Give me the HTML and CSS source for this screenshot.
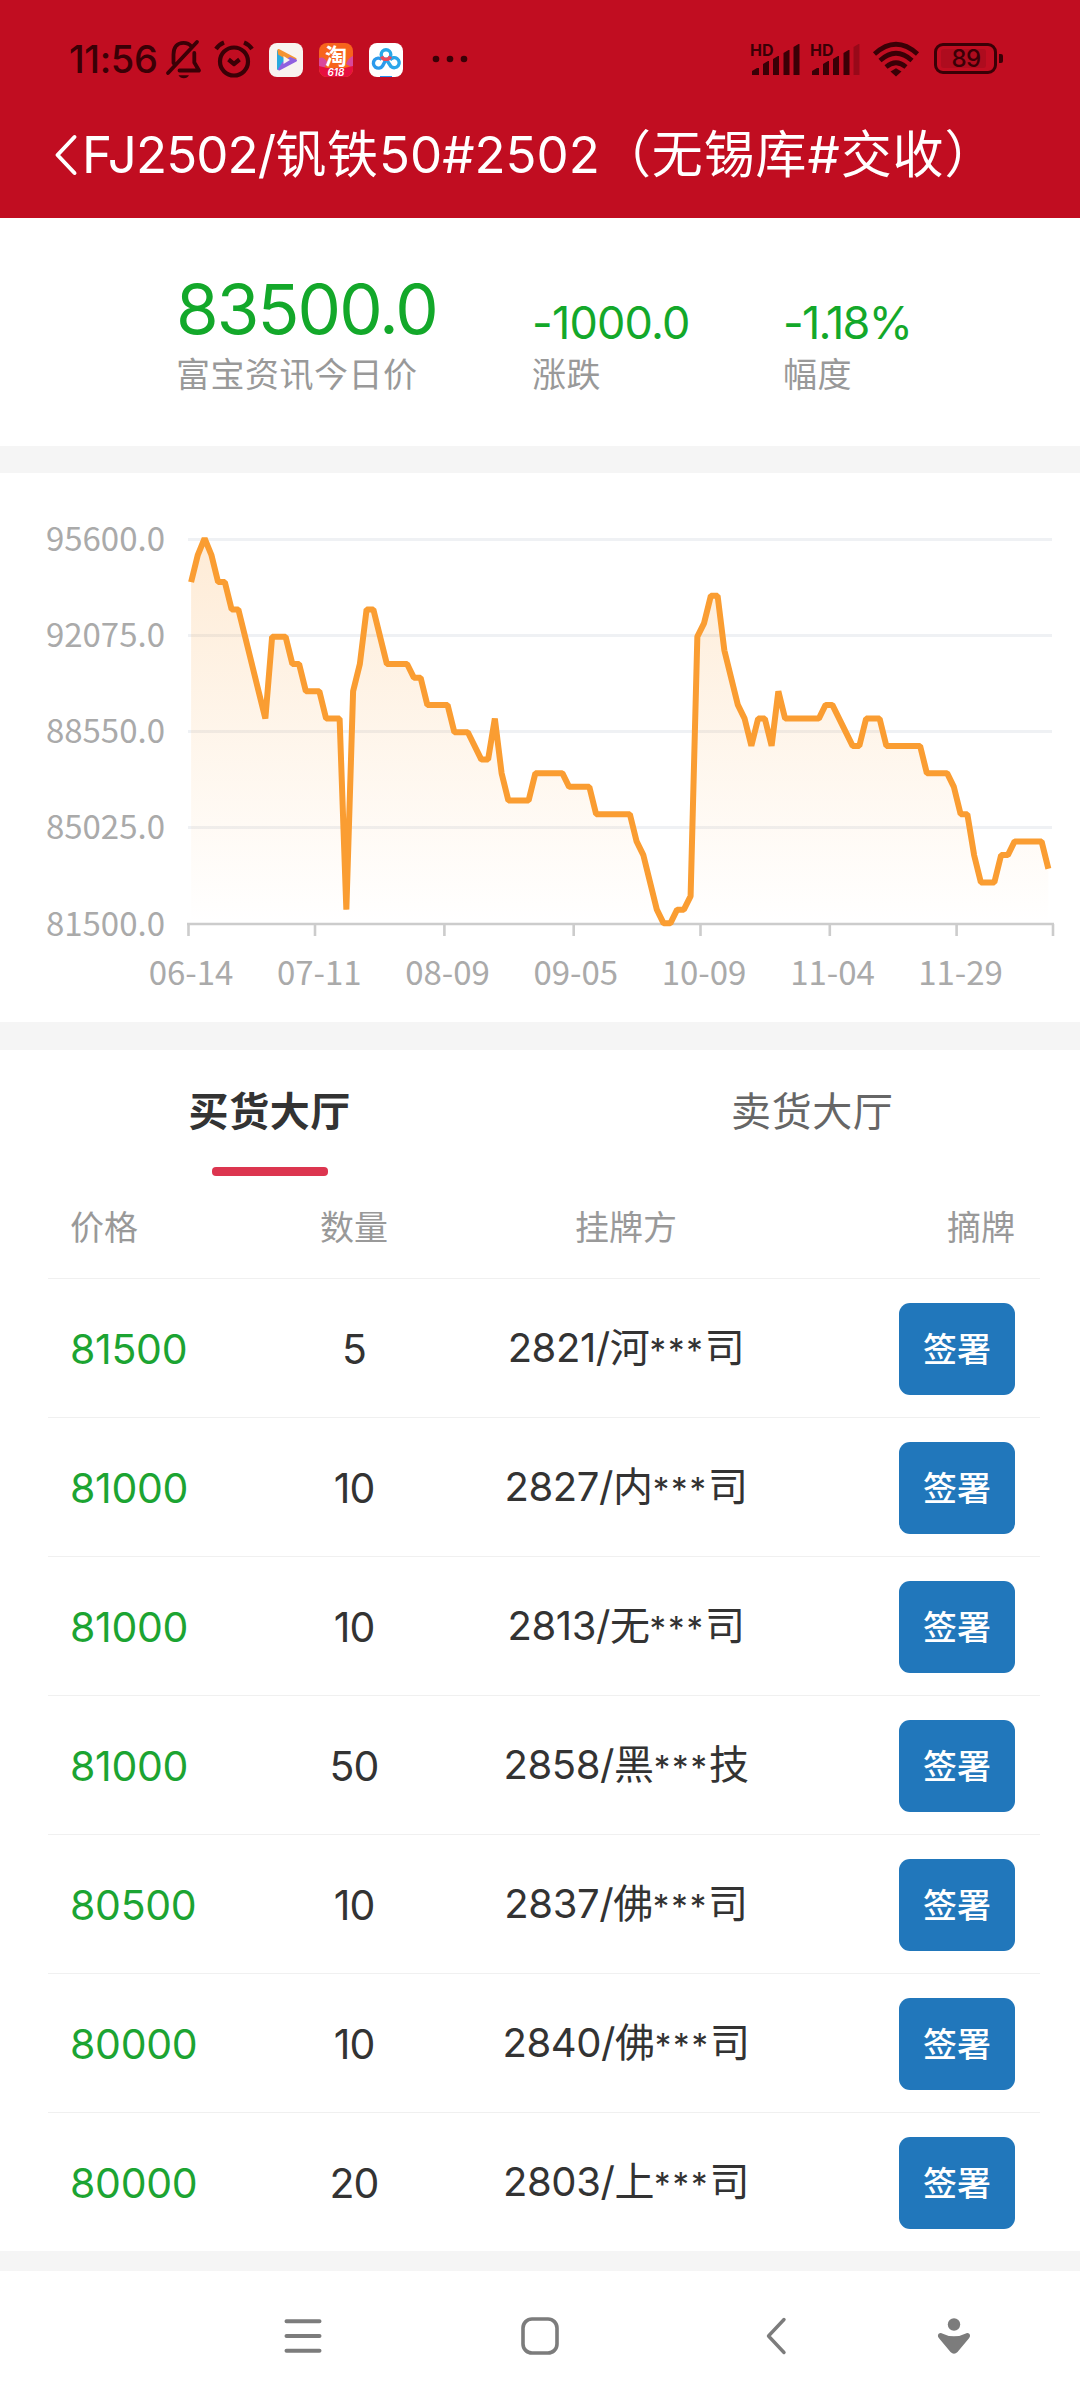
FILE: index.html
```html
<!DOCTYPE html>
<html lang="zh-CN">
<head>
<meta charset="utf-8">
<title>FJ2502</title>
<link rel="stylesheet" href="styles.css">
</head>
<body>
<header class="top">
  <div class="status">
    <div class="status-left">
      <span class="clock">11:56</span>
      <svg class="ic-bell" width="36" height="40" viewBox="0 0 36 40" fill="none" stroke="#3a0006" stroke-width="3.8" stroke-linecap="round" stroke-linejoin="round"><path d="M7.500 24V15.500C7.500 8 11.500 3.800 17.500 3.800c3.500 0 6 1.200 7.800 3.600M28.300 14v9.500L33 31.500H13.500M31 3 2 34"/><path d="M12.500 36.200h10.500c-1 1.800-2.800 3-5.200 3s-4.300-1.200-5.300-3z" fill="#3a0006" stroke="none"/></svg>
      <svg class="ic-alarm" width="40" height="38" viewBox="0 0 40 38" fill="none" stroke="#3a0006" stroke-width="4.200" stroke-linejoin="round"><circle cx="20" cy="21.500" r="14"/><path d="m14.500 19.500 5.500 4.500 5.500-4.500M2 9Q5 4.500 10 2.500M38 9Q35 4.500 30 2.500"/></svg>
      <svg class="ic-app" width="34" height="34" viewBox="0 0 34 34"><rect width="34" height="34" rx="8" fill="#f8f3f0"/><path d="M9 8v18l6-4V11z" fill="#2aa9dd" stroke="#2aa9dd" stroke-width="2" stroke-linejoin="round"/><path d="m9.500 7 17 9-3 3-13.500-8z" fill="#f59331" stroke="#f59331" stroke-width="2" stroke-linejoin="round"/><path d="m10 26.500 17-9-6-2.500-7 5z" fill="#9060e0" stroke="#9060e0" stroke-width="2" stroke-linejoin="round"/><path d="m14.500 13 6.500 4-6.500 4z" fill="#f8f3f0"/></svg>
      <svg class="ic-app" width="34" height="34" viewBox="0 0 34 34"><defs><clipPath id="tb"><rect width="34" height="34" rx="8"/></clipPath></defs><g clip-path="url(#tb)"><path fill="#f7641c" d="M0 0h34v34H0z"/><path fill="#d8489c" d="M0 15q5-2 8 4l-3 7H0zM34 13q-5 2-7 8l7 4z"/><path fill="#e60f3f" d="M0 23q17 5 34 0v11H0z"/></g><text x="17" y="21" class="tao">淘</text><text x="17" y="33" class="promo">618</text></svg>
      <svg class="ic-app" width="34" height="34" viewBox="0 0 34 34" fill="none" stroke-width="3.400"><rect width="34" height="34" rx="8" fill="#fff"/><path d="M17 16.500 13.500 23a5 5 0 1 1-.7-6.500" stroke="#2b9aec"/><path d="m17 16 5 7.500a5 5 0 1 0-1-6.500" stroke="#2ba6ea"/><circle cx="17" cy="11.500" r="4.800" stroke="#28a8e8"/><path d="M12.600 13.500a4.800 4.800 0 0 0 8.800 0" stroke="#e84a5c"/><path d="M11 33.500h12" stroke="#2b8df0" stroke-width="1"/></svg>
      <svg class="ic-more" width="36" height="8" viewBox="0 0 36 8" fill="#3a0006"><circle cx="4" cy="4" r="3.300"/><circle cx="18" cy="4" r="3.300"/><circle cx="32" cy="4" r="3.300"/></svg>
    </div>
    <div class="status-right">
      <svg width="50" height="34" viewBox="0 0 50 34" fill="#3a0006"><text x="0" y="14" class="hd">HD</text><path d="M2 33v-4l5-3h2v7zM13 33V22l5-3h1v14zM23 33V17l5-3h1v19zM33.500 33V11l5-3h1v25zM43.500 33V5l5-3h1v31z"/></svg>
      <svg width="50" height="34" viewBox="0 0 50 34" fill="#3a0006"><text x="0" y="14" class="hd">HD</text><path d="M2 33v-4l5-3h2v7zM13 33V22l5-3h1v14zM23 33V17l5-3h1v19zM33.500 33V11l5-3h1v25z"/><path d="M43.500 33V5l5-3h1v31z" opacity=".3"/></svg>
      <svg class="ic-wifi" width="46" height="36" viewBox="0 0 46 36" fill="none" stroke="#3a0006" stroke-width="4.600"><path d="M1.500 13Q23-6.500 44.500 13M7 19.500Q23 5 39 19.500M13 26q10-8.500 20 0"/><path d="m17.500 30.500 5.500-3.300 5.500 3.300L23 35.500z" fill="#3a0006" stroke="none"/></svg>
      <svg class="ic-batt" width="70" height="32" viewBox="0 0 70 32"><rect x="1.500" y="1.500" width="60" height="28" rx="7.500" fill="none" stroke="#3a0006" stroke-width="3"/><rect x="7" y="6" width="45" height="19" rx="3" fill="#ae0c1e"/><path d="M65 11h2q2 0 2 2v5q0 2-2 2h-2z" fill="#3a0006"/><text x="32" y="24" class="batt-num">89</text></svg>
    </div>
  </div>
  <div class="title-bar">
    <svg width="22" height="42" viewBox="0 0 22 42" fill="none" stroke="#fff" stroke-width="4" stroke-linecap="round" stroke-linejoin="round"><path d="M19.500 3 2.500 21l17 18"/></svg>
    <h1 class="title"><span class="code">FJ2502/</span>钒铁<span class="spec">50#2502</span>（无锡库#交收）</h1>
  </div>
</header>

<section class="summary">
  <div class="stat main"><div class="value big">83500.0</div><div class="label">富宝资讯今日价</div></div>
  <div class="stat change"><div class="value">-1000.0</div><div class="label">涨跌</div></div>
  <div class="stat range"><div class="value pct">-1.18%</div><div class="label">幅度</div></div>
</section>

<section class="chart">
  <svg width="1080" height="549" viewBox="0 0 1080 549">
    <defs><linearGradient id="fade" x1="0" y1="1" x2="0" y2="0"><stop offset="0" stop-color="#fa9d32" stop-opacity=".2"/><stop offset="1" stop-color="#fa9d32" stop-opacity="0"/></linearGradient></defs>
    <path d="M188 66.500h864M188 162.500h864M188 258.500h864M188 354.500h864" stroke="#eff1f4" stroke-width="3"/>
    <path d="M187 451h867M188.500 451v12M315 451v12M444.400 451v12M573.700 451v12M700.500 451v12M829.800 451v12M956.600 451v12M1053 451v12" stroke="#cccccc" stroke-width="2.600"/>
    <g transform="translate(191.100 2675.300) scale(6.750 -27.300)">
      <polygon fill="url(#fade)" points="0,81.5 0,94 1,95 2,95.6 3,95 4,94 5,94 6,93 7,93 11,89 12,92 14,92 15,91 16,91 17,90 19,90 20,89 22,89 23,82 24,90 25,91 26,93 27,93 28,92 29,91 32,91 33,90.5 34,90.5 35,89.5 38,89.5 39,88.5 41,88.5 43,87.5 44,87.5 45,89 46,87 47,86 50,86 51,87 55,87 56,86.5 59,86.5 60,85.5 65,85.5 66,84.5 67,84 69,82 70,81.5 71,81.5 72,82 73,82 74,82.5 75,92 76,92.5 77,93.5 78,93.5 79,91.5 81,89.5 82,89 83,88 84,89 85,89 86,88 87,90 88,89 93,89 94,89.5 95,89.5 98,88 99,88 100,89 102,89 103,88 108,88 109,87 112,87 113,86.5 114,85.5 115,85.5 116,84 117,83 119,83 120,84 121,84 122,84.5 126,84.5 127,83.5 127,81.5"/>
      <polyline class="line" points="0,94 1,95 2,95.6 3,95 4,94 5,94 6,93 7,93 11,89 12,92 14,92 15,91 16,91 17,90 19,90 20,89 22,89 23,82 24,90 25,91 26,93 27,93 28,92 29,91 32,91 33,90.5 34,90.5 35,89.5 38,89.5 39,88.5 41,88.5 43,87.5 44,87.5 45,89 46,87 47,86 50,86 51,87 55,87 56,86.5 59,86.5 60,85.5 65,85.5 66,84.5 67,84 69,82 70,81.5 71,81.5 72,82 73,82 74,82.5 75,92 76,92.5 77,93.5 78,93.5 79,91.5 81,89.5 82,89 83,88 84,89 85,89 86,88 87,90 88,89 93,89 94,89.5 95,89.5 98,88 99,88 100,89 102,89 103,88 108,88 109,87 112,87 113,86.5 114,85.5 115,85.5 116,84 117,83 119,83 120,84 121,84 122,84.5 126,84.5 127,83.5"/>
    </g>
    <g class="axis y-axis"><text x="165" y="78">95600.0</text><text x="165" y="174">92075.0</text><text x="165" y="270">88550.0</text><text x="165" y="366">85025.0</text><text x="165" y="463">81500.0</text></g>
    <g class="axis x-axis"><text x="191" y="512">06-14</text><text x="319.300" y="512">07-11</text><text x="447.500" y="512">08-09</text><text x="575.800" y="512">09-05</text><text x="704" y="512">10-09</text><text x="832.500" y="512">11-04</text><text x="960.500" y="512">11-29</text></g>
  </svg>
</section>

<nav class="tabs"><div class="tab active">买货大厅</div><div class="tab">卖货大厅</div></nav>
<main class="table">
  <div class="row head"><span>价格</span><span class="c">数量</span><span class="c">挂牌方</span><span class="r">摘牌</span></div>
  <div class="row"><span class="price">81500</span><span class="c">5</span><span class="c party">2821/河<i>***</i>司</span><button class="sign">签署</button></div>
  <div class="row"><span class="price">81000</span><span class="c">10</span><span class="c party">2827/内<i>***</i>司</span><button class="sign">签署</button></div>
  <div class="row"><span class="price">81000</span><span class="c">10</span><span class="c party">2813/无<i>***</i>司</span><button class="sign">签署</button></div>
  <div class="row"><span class="price">81000</span><span class="c">50</span><span class="c party">2858/黑<i>***</i>技</span><button class="sign">签署</button></div>
  <div class="row"><span class="price">80500</span><span class="c">10</span><span class="c party">2837/佛<i>***</i>司</span><button class="sign">签署</button></div>
  <div class="row"><span class="price">80000</span><span class="c">10</span><span class="c party">2840/佛<i>***</i>司</span><button class="sign">签署</button></div>
  <div class="row"><span class="price">80000</span><span class="c">20</span><span class="c party">2803/上<i>***</i>司</span><button class="sign">签署</button></div>
</main>
<footer class="sysnav">
  <svg class="menu" width="38" height="38" viewBox="0 0 38 38" fill="none" stroke="#7c7c7c" stroke-width="4" stroke-linecap="round"><path d="M2.500 4.200h33M2.500 19h33M2.500 33.800h33"/></svg>
  <svg class="home" width="38" height="38" viewBox="0 0 38 38" fill="none" stroke="#7c7c7c" stroke-width="3.600"><rect x="2" y="2" width="34" height="34" rx="9"/></svg>
  <svg class="back" width="20" height="38" viewBox="0 0 20 38" fill="none" stroke="#7c7c7c" stroke-width="3.400" stroke-linecap="round" stroke-linejoin="round"><path d="M18 2.500 2.500 19 18 35.500"/></svg>
  <svg width="34" height="38" viewBox="0 0 34 38" fill="#7c7c7c"><circle cx="17" cy="7.500" r="6.200"/><path d="M4.500 16.200Q17 22.500 29.500 16.200c3-.8 4.800 2.500 2.500 5L20.500 35q-3.500 3.500-7 0L2 21.200c-2.300-2.500-.5-5.800 2.500-5z"/></svg>
</footer>
</body>
</html>
```

FILE: styles.css
```css
* { box-sizing: border-box; }
body {
  margin: 0;
  width: 1080px;
  background: #fff;
  color: #333;
  font-family: Inter, "Noto Sans CJK SC", sans-serif;
}
svg { display: block; flex: none; overflow: visible; }

.top { height: 218px; background: #c10d21; }
.status {
  height: 118px;
  padding: 0 76px 0 69px;
  display: flex;
  align-items: center;
  justify-content: space-between;
}
.status-left, .status-right { display: flex; align-items: center; }
.clock { width: 95px; font-size: 38px; font-weight: 500; letter-spacing: -.4px; color: #3a0006; }
.ic-bell { margin-left: 2px; }
.ic-alarm { margin: 0 15px 0 12px; }
.ic-app { margin-top: 1px; margin-right: 16px; }
.ic-more { margin-left: 13px; }
.tao { font-size: 22px; font-weight: 700; fill: #fff; text-anchor: middle; }
.promo { font-size: 10px; font-style: italic; font-weight: 600; fill: #fff; text-anchor: middle; }
.status-right { gap: 10px; }
.ic-wifi { margin-left: 3px; }
.ic-batt { margin-left: 5px; }
.hd { font-size: 16px; font-weight: 700; }
.batt-num { font-size: 24px; font-weight: 500; letter-spacing: -.5px; fill: #3a0006; text-anchor: middle; }

.title-bar { height: 74px; padding-left: 55px; display: flex; align-items: center; gap: 5px; }
.title { margin: 0; font-size: 51px; line-height: 74px; font-weight: 400; letter-spacing: .9px; color: #fff; white-space: nowrap; }
.code { letter-spacing: -.9px; }
.spec { letter-spacing: 0; }

.summary { height: 255px; padding: 0 0 46px 176px; border-bottom: 27px solid #f5f5f5; display: flex; align-items: flex-end; }
.main { width: 356px; }
.change { width: 251px; }
.value { margin-bottom: 2px; color: #13a82a; font-size: 45px; line-height: 50px; letter-spacing: -.8px; }
.pct { letter-spacing: -1.7px; }
.big { margin-bottom: 6px; font-size: 69px; line-height: 70px; letter-spacing: -1.9px; }
.label { color: #999; font-size: 34px; line-height: 50px; letter-spacing: .5px; }

.chart { height: 577px; border-bottom: 28px solid #f5f5f5; }
.line { fill: none; stroke: #fa9d32; stroke-width: 6px; stroke-linejoin: bevel; vector-effect: non-scaling-stroke; }
.axis { font-family: "Noto Sans CJK SC", sans-serif; font-size: 33px; fill: #aaa; }
.y-axis { text-anchor: end; }
.x-axis { text-anchor: middle; }

.tabs { display: flex; height: 127px; padding-left: 2px; }
.tab { flex: 1; display: flex; flex-direction: column; align-items: center; padding-top: 32px; font-size: 40px; line-height: 60px; letter-spacing: .6px; color: #666; }
.tab + .tab { padding-left: 7px; }
.active { color: #333; font-weight: 700; }
.active::after { content: ""; width: 116px; height: 9px; margin-top: 25px; border-radius: 4px; background: #dc354f; }

.table { margin: 0 40px 0 48px; }
.row {
  height: 139px;
  padding: 1px 25px 0 22px;
  border-top: 1px solid #f0f0f0;
  display: grid;
  grid-template-columns: 188px 192px 352px 213px;
  align-items: center;
  font-size: 41px;
  line-height: 60px;
  letter-spacing: -1px;
}
.head { height: 101px; padding-bottom: 1px; border-top: 0; color: #999; font-size: 34px; letter-spacing: 0; }
.c { text-align: center; }
.r { text-align: right; }
.price { color: #1ca432; letter-spacing: -.3px; }
.party { font-size: 40px; letter-spacing: -.4px; }
.party i { font-style: normal; font-size: 33px; letter-spacing: 1.9px; }
.sign {
  justify-self: end;
  width: 116px;
  height: 92px;
  padding: 0 0 2px;
  border: 0;
  border-radius: 11px;
  background: #2177bb;
  color: #fff;
  font: 500 34px/88px "Noto Sans CJK SC", sans-serif;
}
.sysnav {
  height: 150px;
  border-top: 20px solid #f5f5f5;
  padding: 0 0 1px 284px;
  display: flex;
  align-items: center;
}
.menu { margin-right: 199px; }
.home { margin-right: 207px; }
.back { margin-right: 151px; }
```
